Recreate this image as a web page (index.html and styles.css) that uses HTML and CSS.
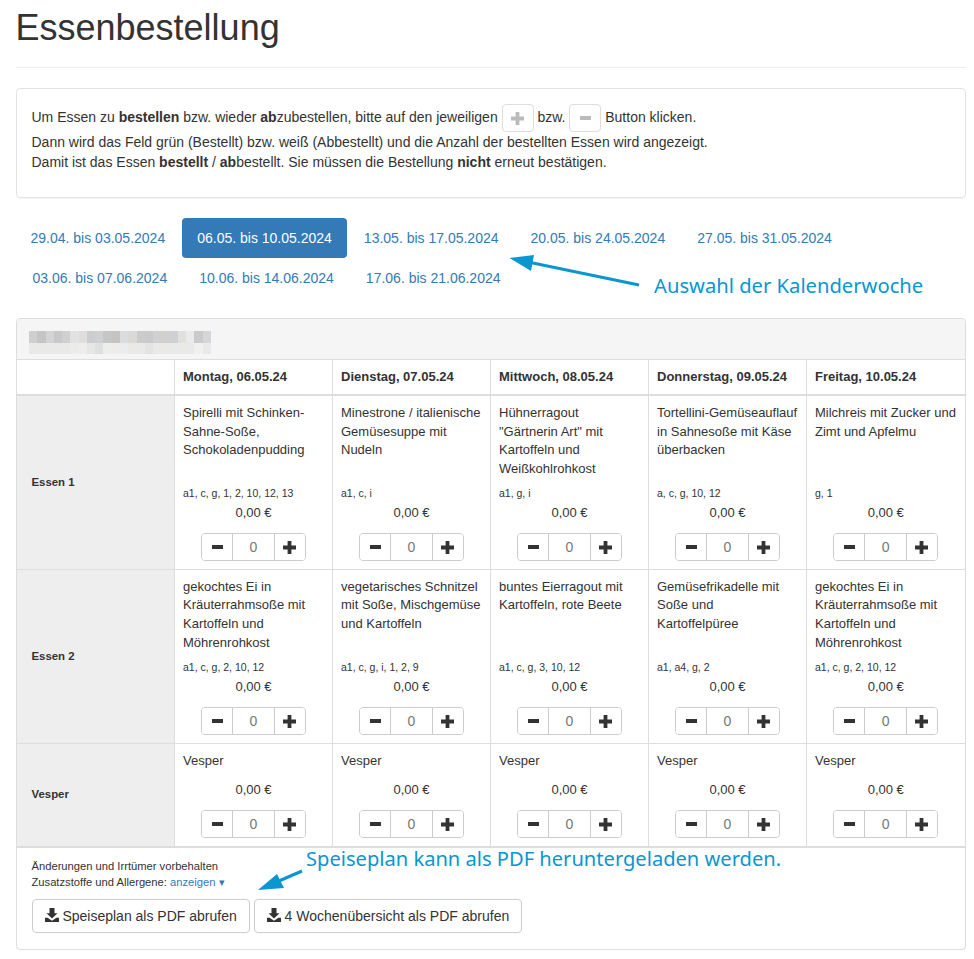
FILE: index.html
```html
<!DOCTYPE html>
<html lang="de">
<head>
<meta charset="utf-8">
<title>Essenbestellung</title>
<link rel="stylesheet" href="styles.css">
</head>
<body>
<svg class="sprites" width="0" height="0" aria-hidden="true">
  <symbol id="i-plus" viewBox="0 0 13 13"><path d="M4.6 0h3.800v4.600H13v3.800H8.400v4.600H4.600V8.400H0V4.600h4.600z"/></symbol>
  <symbol id="i-minus" viewBox="0 0 11 4"><path d="M0 0h11v4H0z"/></symbol>
  <symbol id="i-download" viewBox="0 0 14 14"><path d="M4.500 0h5v5.200h3L7 10.400 1.500 5.200h3zM0 9.800h2.600L7 12.800l4.400-3H14V14H0z"/></symbol>
</svg>
<main class="page">
  <h1 class="title">Essenbestellung</h1>

  <section class="well">
    <p class="intro">Um Essen zu <b>bestellen</b> bzw. wieder <b>ab</b>zubestellen, bitte auf den jeweiligen <span class="demo-btn"><svg class="ico-plus"><use href="#i-plus"/></svg></span> bzw. <span class="demo-btn"><svg class="ico-minus"><use href="#i-minus"/></svg></span> Button klicken.<br>
    Dann wird das Feld grün (Bestellt) bzw. weiß (Abbestellt) und die Anzahl der bestellten Essen wird angezeigt.<br>
    Damit ist das Essen <b>bestellt</b> / <b>ab</b>bestellt. Sie müssen die Bestellung <b>nicht</b> erneut bestätigen.</p>
  </section>

  <ul class="pills">
    <li><a href="#">29.04. bis 03.05.2024</a></li>
    <li class="active"><a href="#">06.05. bis 10.05.2024</a></li>
    <li><a href="#">13.05. bis 17.05.2024</a></li>
    <li><a href="#">20.05. bis 24.05.2024</a></li>
    <li><a href="#">27.05. bis 31.05.2024</a></li>
    <li class="break"><a href="#">03.06. bis 07.06.2024</a></li>
    <li><a href="#">10.06. bis 14.06.2024</a></li>
    <li><a href="#">17.06. bis 21.06.2024</a></li>
  </ul>

  <section class="panel">
    <div class="panel-heading">
      <svg class="blur" width="182" height="23" viewBox="0 0 22 2" preserveAspectRatio="none" aria-hidden="true" shape-rendering="crispEdges">
        <rect x="0" y="0" width="1" height="1" fill="#cfcfcf"/><rect x="1" y="0" width="1" height="1" fill="#c4c6c6"/><rect x="2" y="0" width="1" height="1" fill="#d4d4d4"/><rect x="3" y="0" width="1" height="1" fill="#c6c8ca"/><rect x="4" y="0" width="1" height="1" fill="#d0d0d0"/><rect x="5" y="0" width="1" height="1" fill="#e2e2e2"/><rect x="6" y="0" width="1" height="1" fill="#e0dedc"/><rect x="7" y="0" width="1" height="1" fill="#cbcdd0"/><rect x="8" y="0" width="1" height="1" fill="#d0d0d2"/><rect x="9" y="0" width="1" height="1" fill="#c5c7c7"/><rect x="10" y="0" width="1" height="1" fill="#c6c3c3"/><rect x="11" y="0" width="1" height="1" fill="#dadde0"/><rect x="12" y="0" width="1" height="1" fill="#dcd8d5"/><rect x="13" y="0" width="1" height="1" fill="#cbcbcb"/><rect x="14" y="0" width="1" height="1" fill="#cacaca"/><rect x="15" y="0" width="1" height="1" fill="#cfd0d2"/><rect x="16" y="0" width="1" height="1" fill="#d2cfcf"/><rect x="17" y="0" width="1" height="1" fill="#cfd0d3"/><rect x="18" y="0" width="1" height="1" fill="#e2e0dd"/><rect x="19" y="0" width="1" height="1" fill="#e9eaec"/><rect x="20" y="0" width="1" height="1" fill="#cbc9c9"/><rect x="21" y="0" width="1" height="1" fill="#d5d6d9"/>
        <rect x="0" y="1" width="22" height="1" fill="#e9e9e8"/><rect x="5" y="1" width="1" height="1" fill="#ebebea"/><rect x="6" y="1" width="1" height="1" fill="#eeedeb"/><rect x="7" y="1" width="1" height="1" fill="#e6e6e6"/><rect x="8" y="1" width="1" height="1" fill="#dedfdf"/><rect x="9" y="1" width="1" height="1" fill="#ededec"/><rect x="10" y="1" width="1" height="1" fill="#eeeceb"/><rect x="11" y="1" width="1" height="1" fill="#ebecee"/><rect x="12" y="1" width="1" height="1" fill="#ebe9e7"/><rect x="14" y="1" width="1" height="1" fill="#e3e3e3"/><rect x="20" y="1" width="1" height="1" fill="#f0f0f0"/>
      </svg>
    </div>
    <table class="menu">
      <colgroup><col class="col"><col class="col"><col class="col"><col class="col"><col class="col"><col class="col"></colgroup>
      <thead>
        <tr><th></th><th>Montag, 06.05.24</th><th>Dienstag, 07.05.24</th><th>Mittwoch, 08.05.24</th><th>Donnerstag, 09.05.24</th><th>Freitag, 10.05.24</th></tr>
      </thead>
      <tbody>
        <tr class="first">
          <th class="row-label">Essen 1</th>
          <td><div class="dish tall">Spirelli mit Schinken-Sahne-Soße, Schokoladenpudding</div><div class="allergens">a1, c, g, 1, 2, 10, 12, 13</div><div class="price">0,00 €</div><div class="stepper"><button class="step"><svg class="ico-minus"><use href="#i-minus"/></svg></button><span class="qty">0</span><button class="step"><svg class="ico-plus"><use href="#i-plus"/></svg></button></div></td>
          <td><div class="dish tall">Minestrone / italienische Gemüsesuppe mit Nudeln</div><div class="allergens">a1, c, i</div><div class="price">0,00 €</div><div class="stepper"><button class="step"><svg class="ico-minus"><use href="#i-minus"/></svg></button><span class="qty">0</span><button class="step"><svg class="ico-plus"><use href="#i-plus"/></svg></button></div></td>
          <td><div class="dish tall">Hühnerragout "Gärtnerin Art" mit Kartoffeln und Weißkohlrohkost</div><div class="allergens">a1, g, i</div><div class="price">0,00 €</div><div class="stepper"><button class="step"><svg class="ico-minus"><use href="#i-minus"/></svg></button><span class="qty">0</span><button class="step"><svg class="ico-plus"><use href="#i-plus"/></svg></button></div></td>
          <td><div class="dish tall">Tortellini-Gemüseauflauf in Sahnesoße mit Käse überbacken</div><div class="allergens">a, c, g, 10, 12</div><div class="price">0,00 €</div><div class="stepper"><button class="step"><svg class="ico-minus"><use href="#i-minus"/></svg></button><span class="qty">0</span><button class="step"><svg class="ico-plus"><use href="#i-plus"/></svg></button></div></td>
          <td><div class="dish tall">Milchreis mit Zucker und Zimt und Apfelmu</div><div class="allergens">g, 1</div><div class="price">0,00 €</div><div class="stepper"><button class="step"><svg class="ico-minus"><use href="#i-minus"/></svg></button><span class="qty">0</span><button class="step"><svg class="ico-plus"><use href="#i-plus"/></svg></button></div></td>
        </tr>
        <tr class="second">
          <th class="row-label">Essen 2</th>
          <td><div class="dish tall">gekochtes Ei in Kräuterrahmsoße mit Kartoffeln und Möhrenrohkost</div><div class="allergens">a1, c, g, 2, 10, 12</div><div class="price">0,00 €</div><div class="stepper"><button class="step"><svg class="ico-minus"><use href="#i-minus"/></svg></button><span class="qty">0</span><button class="step"><svg class="ico-plus"><use href="#i-plus"/></svg></button></div></td>
          <td><div class="dish tall">vegetarisches Schnitzel mit Soße, Mischgemüse und Kartoffeln</div><div class="allergens">a1, c, g, i, 1, 2, 9</div><div class="price">0,00 €</div><div class="stepper"><button class="step"><svg class="ico-minus"><use href="#i-minus"/></svg></button><span class="qty">0</span><button class="step"><svg class="ico-plus"><use href="#i-plus"/></svg></button></div></td>
          <td><div class="dish tall">buntes Eierragout mit Kartoffeln, rote Beete</div><div class="allergens">a1, c, g, 3, 10, 12</div><div class="price">0,00 €</div><div class="stepper"><button class="step"><svg class="ico-minus"><use href="#i-minus"/></svg></button><span class="qty">0</span><button class="step"><svg class="ico-plus"><use href="#i-plus"/></svg></button></div></td>
          <td><div class="dish tall">Gemüsefrikadelle mit Soße und Kartoffelpüree</div><div class="allergens">a1, a4, g, 2</div><div class="price">0,00 €</div><div class="stepper"><button class="step"><svg class="ico-minus"><use href="#i-minus"/></svg></button><span class="qty">0</span><button class="step"><svg class="ico-plus"><use href="#i-plus"/></svg></button></div></td>
          <td><div class="dish tall">gekochtes Ei in Kräuterrahmsoße mit Kartoffeln und Möhrenrohkost</div><div class="allergens">a1, c, g, 2, 10, 12</div><div class="price">0,00 €</div><div class="stepper"><button class="step"><svg class="ico-minus"><use href="#i-minus"/></svg></button><span class="qty">0</span><button class="step"><svg class="ico-plus"><use href="#i-plus"/></svg></button></div></td>
        </tr>
        <tr class="last">
          <th class="row-label">Vesper</th>
          <td><div class="dish">Vesper</div><div class="price">0,00 €</div><div class="stepper"><button class="step"><svg class="ico-minus"><use href="#i-minus"/></svg></button><span class="qty">0</span><button class="step"><svg class="ico-plus"><use href="#i-plus"/></svg></button></div></td>
          <td><div class="dish">Vesper</div><div class="price">0,00 €</div><div class="stepper"><button class="step"><svg class="ico-minus"><use href="#i-minus"/></svg></button><span class="qty">0</span><button class="step"><svg class="ico-plus"><use href="#i-plus"/></svg></button></div></td>
          <td><div class="dish">Vesper</div><div class="price">0,00 €</div><div class="stepper"><button class="step"><svg class="ico-minus"><use href="#i-minus"/></svg></button><span class="qty">0</span><button class="step"><svg class="ico-plus"><use href="#i-plus"/></svg></button></div></td>
          <td><div class="dish">Vesper</div><div class="price">0,00 €</div><div class="stepper"><button class="step"><svg class="ico-minus"><use href="#i-minus"/></svg></button><span class="qty">0</span><button class="step"><svg class="ico-plus"><use href="#i-plus"/></svg></button></div></td>
          <td><div class="dish">Vesper</div><div class="price">0,00 €</div><div class="stepper"><button class="step"><svg class="ico-minus"><use href="#i-minus"/></svg></button><span class="qty">0</span><button class="step"><svg class="ico-plus"><use href="#i-plus"/></svg></button></div></td>
        </tr>
      </tbody>
    </table>
    <div class="panel-footer">
      <p class="note">Änderungen und Irrtümer vorbehalten<br>Zusatzstoffe und Allergene: <a href="#">anzeigen ▾</a></p>
      <div class="actions">
        <button class="btn"><svg class="ico-download"><use href="#i-download"/></svg> Speiseplan als PDF abrufen</button>
        <button class="btn"><svg class="ico-download"><use href="#i-download"/></svg> 4 Wochenübersicht als PDF abrufen</button>
      </div>
    </div>
  </section>
</main>

<div class="note-week">Auswahl der Kalenderwoche</div>
<div class="note-pdf">Speiseplan kann als PDF heruntergeladen werden.</div>
<svg class="arrows" width="974" height="959" viewBox="0 0 974 959" aria-hidden="true">
  <path class="arrow-line" d="M639 285L528 262"/>
  <path class="arrow-head" d="M509.500 258L534 255L531 271z"/>
  <path class="arrow-line" d="M302 871L272 884"/>
  <path class="arrow-head" d="M258 890L277 874L284 888z"/>
</svg>
</body>
</html>
```

FILE: styles.css
```css
* { box-sizing: border-box; }

html, body { margin: 0; padding: 0; background: #fff; }

body {
  position: relative;
  font-family: "Liberation Sans", Arial, sans-serif;
  font-size: 14px;
  line-height: 20px;
  color: #333;
}

.sprites { position: absolute; }

.page { padding: 8px 8.5px 0 15.5px; }

.title {
  margin: 0 0 20px;
  padding-bottom: 19px;
  border-bottom: 1px solid #eee;
  font-size: 36px;
  font-weight: 400;
  line-height: 40px;
}

.well {
  padding: 15px;
  border: 1px solid #e3e3e3;
  border-radius: 4px;
  box-shadow: 0 1px 1px rgba(0, 0, 0, .05);
}

.intro { margin: 0 0 10px; }

.demo-btn {
  display: inline-flex;
  align-items: center;
  justify-content: center;
  width: 32px;
  height: 28px;
  vertical-align: middle;
  border: 1px solid #ddd;
  border-radius: 4px;
  fill: #bbb;
}

.ico-plus { width: 13px; height: 13px; display: block; }
.ico-minus { width: 11px; height: 4px; display: block; }
.ico-download { width: 14px; height: 14px; vertical-align: -1px; fill: #333; }

.pills {
  display: flex;
  flex-wrap: wrap;
  margin: 20px 0;
  padding: 0;
  list-style: none;
}

.pills li { margin-left: 2px; }
.pills li:first-child { margin-left: 0; }

.pills a {
  display: block;
  padding: 10px 15px;
  border-radius: 4px;
  color: #337ab7;
  text-decoration: none;
}

.pills .active a { background: #337ab7; color: #fff; }

.panel {
  border: 1px solid #ddd;
  border-radius: 4px;
  box-shadow: 0 1px 1px rgba(0, 0, 0, .05);
}

.panel-heading {
  height: 41px;
  padding: 12px 12px 0;
  background: #f5f5f5;
  border-bottom: 1px solid #ddd;
  border-radius: 3px 3px 0 0;
}

.blur { display: block; }

.menu {
  width: 948px;
  table-layout: fixed;
  border-collapse: collapse;
  font-size: 13px;
  line-height: 18.57px;
}

.col { width: 158px; }

.menu th, .menu td {
  padding: 8px;
  border: 1px solid #ddd;
  vertical-align: top;
  text-align: left;
}

.menu thead th { padding-bottom: 7px; border-top: 0; border-bottom-width: 2px; }
.menu tr > :first-child { border-left: 0; }
.menu tr > :last-child { border-right: 0; }
.menu .first td { padding: 8.5px 8px 7.5px; }
.menu .second td { padding-bottom: 7.5px; }

.menu .row-label {
  padding-left: 15px;
  vertical-align: middle;
  background: #eee;
  font-size: 11.4px;
}

.menu .last .row-label { padding-bottom: 10px; }
.last .dish { margin-bottom: 11px; }

.dish { margin-bottom: 10px; }
.dish.tall { min-height: 74.3px; }

.allergens {
  margin-bottom: 6px;
  font-size: 10.5px;
  line-height: 10px;
}

.price { margin-bottom: 10.5px; text-align: center; }

.stepper {
  display: flex;
  width: 105px;
  height: 28px;
  margin: 0 auto;
  border: 1px solid #ccc;
  border-radius: 4px;
  overflow: hidden;
}

.step {
  display: flex;
  flex: 0 0 30px;
  align-items: center;
  justify-content: center;
  padding: 0;
  border: 0;
  background: #fff;
  fill: #333;
}

.step .ico-plus { margin-right: 1px; }
.step .ico-minus { margin-left: 1px; }

.qty {
  flex: 1;
  border: solid #ccc;
  border-width: 0 1px;
  line-height: 26px;
  text-align: center;
  font-size: 14px;
  color: #777;
}

.panel-footer { padding: 10px 15px 16px; border-top: 1px solid #ddd; }

.note {
  margin: 0 0 9px;
  font-size: 11.2px;
  line-height: 16px;
}

.note a { color: #337ab7; text-decoration: none; }

.actions { display: flex; gap: 4px; }

.btn {
  height: 34px;
  padding: 6px 12px;
  border: 1px solid #ccc;
  border-radius: 4px;
  background: #fff;
  color: #333;
  font: inherit;
  font-size: 14px;
}

.note-week, .note-pdf {
  position: absolute;
  font-family: "Noto Sans", "Open Sans", sans-serif;
  color: #0a96cf;
  white-space: nowrap;
}

.note-week { left: 654px; top: 271px; font-size: 20.2px; line-height: 28px; }
.note-pdf { left: 306px; top: 844px; font-size: 20.13px; line-height: 28px; }

.arrows { position: absolute; left: 0; top: 0; pointer-events: none; }
.arrow-line { fill: none; stroke: #0a96cf; stroke-width: 3; }
.arrow-head { fill: #0a96cf; }
```
